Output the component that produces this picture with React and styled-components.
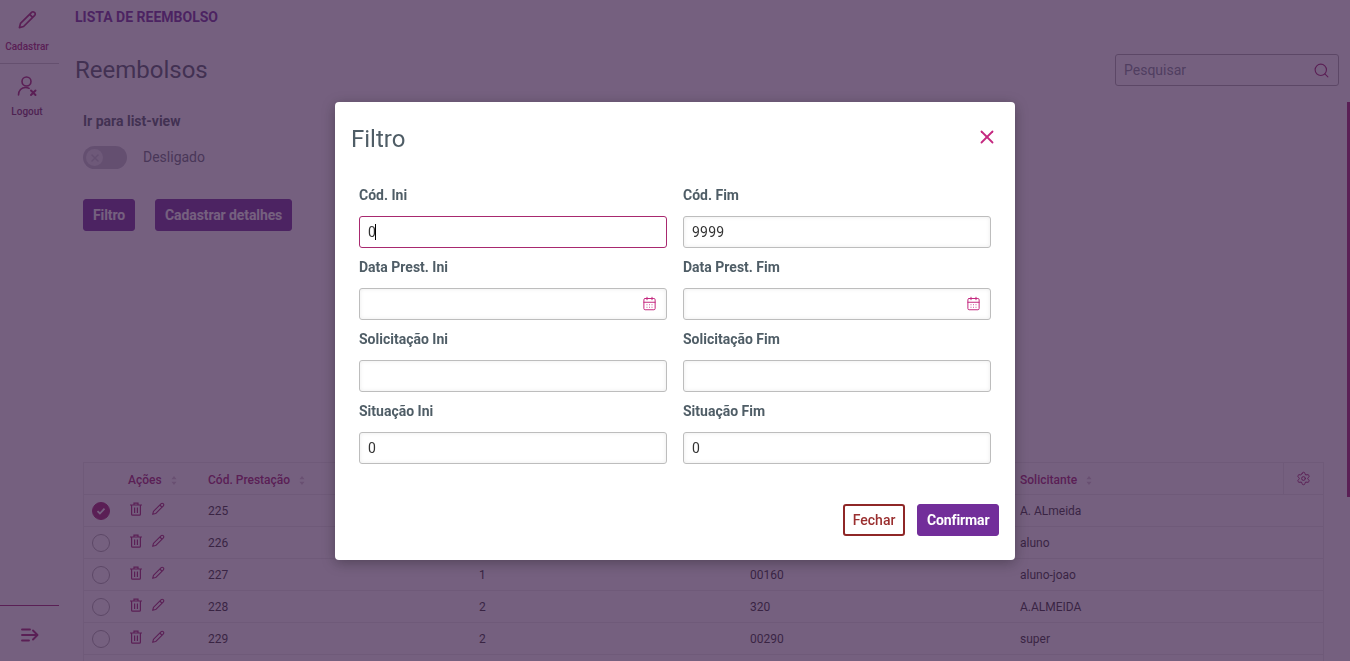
import React from "react";
import styled, { createGlobalStyle } from "styled-components";
import { CalendarDays, Search, Settings, X } from "lucide-react";

const primary = "#a3206f";
const purple = "#722e9a";
const slate = "#4f5d66";
const line = "#ebebeb";

const GlobalStyle = createGlobalStyle`
  html, body { margin: 0; height: 100%; overflow: hidden; background: #fff; }
  body { font-family: Roboto, "Liberation Sans", sans-serif; color: #333; }
  * { box-sizing: border-box; }
`;

const Page = styled.div`
  display: flex;
  width: 1350px;
  height: 661px;
  overflow: hidden;
`;

// menu lateral
const Sidebar = styled.aside`
  width: 59px;
  flex: none;
  display: flex;
  flex-direction: column;
`;

const SideItem = styled.a`
  height: ${(p) => p.$h}px;
  display: flex;
  flex-direction: column;
  align-items: center;
  padding-top: ${(p) => p.$top}px;
  padding-right: 5px;
  font-size: 10px;
  line-height: 12px;
  font-weight: 500;
  color: ${(p) => p.$color};
  border-bottom: ${(p) => (p.$line ? "1px solid #c9c9c9" : "none")};
  svg { margin-bottom: ${(p) => p.$gap}px; color: ${primary}; }
`;

const SideFoot = styled.div`
  margin-top: auto;
  height: 56px;
  border-top: 1px solid ${primary};
  display: flex;
  justify-content: center;
  padding-top: 21px;
  color: ${primary};
`;

const Main = styled.main`
  flex: 1;
  min-width: 0;
  padding: 0 11px 0 16px;
`;

const Crumb = styled.div`
  height: 34px;
  line-height: 34px;
  font-size: 14px;
  font-weight: 700;
  color: ${purple};
`;

const TitleBar = styled.div`
  height: 52px;
  margin-top: 20px;
  display: flex;
  justify-content: space-between;
  align-items: flex-start;
`;

const Title = styled.h1`
  margin: 0;
  font-size: 24px;
  line-height: 32px;
  font-weight: 400;
  color: ${slate};
`;

const SearchBox = styled.div`
  width: 224px;
  height: 32px;
  border: 1px solid #a9a9a9;
  border-radius: 3px;
  display: flex;
  align-items: center;
  justify-content: space-between;
  padding: 0 8px 0 8px;
  font-size: 14px;
  color: #808b96;
  svg { color: ${primary}; }
`;

const Content = styled.section`
  padding-left: 8px;
`;

const SectionLabel = styled.div`
  font-size: 14px;
  line-height: 22px;
  font-weight: 700;
  color: ${slate};
  margin-top: 4px;
`;

const ToggleRow = styled.div`
  display: flex;
  align-items: center;
  gap: 16px;
  margin-top: 14px;
  font-size: 14px;
  line-height: 21px;
  color: #68717a;
`;

const ToggleText = styled.span`
  margin-top: -1px;
`;

const Track = styled.div`
  position: relative;
  width: 44px;
  height: 23px;
  border-radius: 12px;
  background: #c4c4cc;
`;

const Knob = styled.div`
  position: absolute;
  left: 3px;
  top: 3px;
  width: 17px;
  height: 17px;
  border-radius: 50%;
  background: #e6e6ea;
  color: #c4c4cc;
  display: flex;
  align-items: center;
  justify-content: center;
`;

const ButtonRow = styled.div`
  display: flex;
  gap: 20px;
  margin-top: 30px;
`;

const Button = styled.button`
  height: 32px;
  padding: 0 ${(p) => p.$pad ?? 9}px 1px;
  border: ${(p) => (p.$outline ? "2px solid #8f2727" : `1px solid ${purple}`)};
  border-radius: 3px;
  background: ${(p) => (p.$outline ? "#fff" : purple)};
  color: ${(p) => (p.$outline ? "#9a2f2f" : "#fff")};
  font-family: Roboto, "Liberation Sans", sans-serif;
  font-size: 14px;
  font-weight: ${(p) => (p.$outline ? 500 : 700)};
  letter-spacing: ${(p) => (p.$outline ? 0 : "-0.1px")};
`;

const Table = styled.div`
  margin-top: 231px;
  width: 1241px;
  border: 1px solid ${line};
  border-bottom: 0;
`;

const Row = styled.div`
  display: grid;
  grid-template-columns: 44px 80px 271px 271px 270px 263px 40px;
  height: 32px;
  align-items: center;
  border-bottom: 1px solid ${line};
  font-size: 12px;
  color: #333;
`;

const HeadCell = styled.div`
  display: flex;
  align-items: center;
  gap: 9px;
  height: 100%;
  font-weight: 500;
  color: ${primary};
  border-left: ${(p) => (p.$gear ? `1px solid ${line}` : "none")};
  justify-content: ${(p) => (p.$gear ? "center" : "flex-start")};
  padding-top: ${(p) => (p.$gear ? 0 : 3)}px;
`;

const CheckCell = styled.div`
  display: flex;
  padding-left: 8px;
`;

const Radio = styled.div`
  width: 18px;
  height: 18px;
  border-radius: 50%;
  border: 1px solid ${(p) => (p.$on ? primary : "#aaa")};
  background: ${(p) => (p.$on ? primary : "transparent")};
  display: flex;
  align-items: center;
  justify-content: center;
`;

const Actions = styled.div`
  display: flex;
  gap: 8px;
  padding-left: 1px;
  color: ${primary};
  margin-top: -3px;
`;

const Scrollbar = styled.div`
  position: fixed;
  right: 0;
  top: 102px;
  width: 3px;
  height: 395px;
  background: ${primary};
`;

// modal
const Overlay = styled.div`
  position: fixed;
  inset: 0;
  background: rgba(60, 31, 74, 0.71);
  display: flex;
  align-items: flex-start;
  justify-content: center;
  padding-top: 102px;
`;

const Modal = styled.div`
  width: 680px;
  height: 458px;
  background: #fff;
  border-radius: 4px;
  box-shadow: 0 3px 14px rgba(0, 0, 0, 0.3);
  display: flex;
  flex-direction: column;
`;

const ModalHead = styled.div`
  height: 82px;
  padding: 21px 17px 0 16px;
  display: flex;
  justify-content: space-between;
  align-items: flex-start;
`;

const ModalTitle = styled.h2`
  margin: 0;
  font-size: 24px;
  line-height: 32px;
  font-weight: 400;
  color: ${slate};
`;

const CloseIcon = styled(X)`
  color: #c4287f;
  margin-top: 3px;
`;

const FormGrid = styled.div`
  display: grid;
  grid-template-columns: 308px 308px;
  column-gap: 16px;
  padding-left: 24px;
`;

const FormField = styled.label`
  display: block;
  height: 72px;
`;

const FieldLabel = styled.div`
  font-size: 14px;
  line-height: 22px;
  font-weight: 700;
  color: ${slate};
  margin-bottom: 10px;
`;

const InputWrap = styled.div`
  position: relative;
  height: 32px;
`;

const Input = styled.input`
  display: block;
  width: 100%;
  height: 32px;
  padding: 0 8px;
  border: 1px solid ${(p) => (p.$focused ? "#a8296f" : "#bdbdbd")};
  border-radius: 3px;
  background: #fff;
  outline: none;
  box-shadow: ${(p) => (p.$focused ? "none" : "inset 0 0 4px rgba(0, 0, 0, 0.08)")};
  font-family: Roboto, "Liberation Sans", sans-serif;
  font-size: 14px;
  letter-spacing: 0.2px;
  color: #333;
`;

const Caret = styled.span`
  position: absolute;
  left: 16px;
  top: 8px;
  width: 1px;
  height: 16px;
  background: #000;
`;

const CalendarIcon = styled(CalendarDays)`
  position: absolute;
  right: 10px;
  top: 8px;
  color: #c4287f;
`;

const ModalFoot = styled.div`
  margin-top: auto;
  padding: 0 16px 24px;
  display: flex;
  justify-content: flex-end;
  gap: 12px;
`;

const PencilIcon = ({ size = 16, width = 1.5 }) => (
  <svg width={size} height={size} viewBox="0 0 20 20" fill="none" stroke="currentColor" strokeWidth={width} strokeLinejoin="round">
    <path d="M14.6 2.3a1.9 1.9 0 0 1 2.7 0l.4.4a1.9 1.9 0 0 1 0 2.7L6.6 16.500l-4.200 1.100 1.100-4.200z" />
    <path d="M12.600 4.300l3.100 3.100" />
  </svg>
);

const TrashIcon = () => (
  <svg width="14" height="14" viewBox="0 0 14 14" fill="none" stroke="currentColor" strokeWidth="1.2">
    <path d="M1 3h12M5 3V1.200h4V3M2.600 3v9.200c0 .6.4 1 1 1h6.800c.6 0 1-.4 1-1V3M5.600 5.500v5.500M8.400 5.500v5.500" />
  </svg>
);

const LogoutIcon = () => (
  <svg width="22" height="22" viewBox="0 0 22 22" fill="none" stroke="currentColor" strokeWidth="1.6" strokeLinecap="round">
    <circle cx="10.500" cy="6.500" r="4.500" />
    <path d="M2.500 20c0-4.500 3-7.500 7-7.500 1.400 0 2.600.3 3.600.9" />
    <path d="M15 15.500l4.500 4.500M19.500 15.500L15 20" strokeWidth="2" />
  </svg>
);

const CollapseIcon = () => (
  <svg width="18" height="16" viewBox="0 0 18 16" fill="none" stroke="currentColor" strokeWidth="1.9" strokeLinecap="round" strokeLinejoin="round">
    <path d="M1 2.500h8M1 8h15M1 13.500h7M12 3.500L16.500 8 12 12.500" />
  </svg>
);

const SortIcon = () => (
  <svg width="6" height="9" viewBox="0 0 6 9" fill="#d6c6d2">
    <path d="M3 0l2.600 3.200H.4zM3 9L.4 5.800h5.200z" />
  </svg>
);

const CheckMark = () => (
  <svg width="10" height="10" viewBox="0 0 10 10" fill="none" stroke="#fff" strokeWidth="1.8">
    <path d="M1.500 5.200l2.400 2.300 4.600-4.800" />
  </svg>
);

const rows = [
  { id: "225", a: "", b: "", who: "A. ALmeida", on: true },
  { id: "226", a: "", b: "", who: "aluno" },
  { id: "227", a: "1", b: "00160", who: "aluno-joao" },
  { id: "228", a: "2", b: "320", who: "A.ALMEIDA" },
  { id: "229", a: "2", b: "00290", who: "super" },
];

const fields = [
  ["Cód. Ini", "0", "Cód. Fim", "9999"],
  ["Data Prest. Ini", "", "Data Prest. Fim", "", true],
  ["Solicitação Ini", "", "Solicitação Fim", ""],
  ["Situação Ini", "0", "Situação Fim", "0"],
];

const Field = ({ label, value, date, focused }) => (
  <FormField>
    <FieldLabel>{label}</FieldLabel>
    <InputWrap>
      <Input readOnly value={value} $focused={focused} />
      {focused && <Caret />}
      {date && <CalendarIcon size={15} strokeWidth={1.6} />}
    </InputWrap>
  </FormField>
);

const App = () => {
  return (
    <>
      <GlobalStyle />
      <Page>
        <Sidebar>
          <SideItem $h={64} $top={10} $gap={11} $line $color={primary}>
            <PencilIcon size={20} width={1.7} />
            Cadastrar
          </SideItem>
          <SideItem $h={60} $top={11} $gap={9} $color="#7a2a66">
            <LogoutIcon />
            Logout
          </SideItem>
          <SideFoot>
            <CollapseIcon />
          </SideFoot>
        </Sidebar>
        <Main>
          <Crumb>LISTA DE REEMBOLSO</Crumb>
          <TitleBar>
            <Title>Reembolsos</Title>
            <SearchBox>
              Pesquisar
              <Search size={17} strokeWidth={1.6} />
            </SearchBox>
          </TitleBar>
          <Content>
            <SectionLabel>Ir para list-view</SectionLabel>
            <ToggleRow>
              <Track>
                <Knob>
                  <X size={12} strokeWidth={3} />
                </Knob>
              </Track>
              <ToggleText>Desligado</ToggleText>
            </ToggleRow>
            <ButtonRow>
              <Button>Filtro</Button>
              <Button>Cadastrar detalhes</Button>
            </ButtonRow>
            <Table>
              <Row>
                <HeadCell />
                <HeadCell>Ações <SortIcon /></HeadCell>
                <HeadCell>Cód. Prestação <SortIcon /></HeadCell>
                <HeadCell />
                <HeadCell />
                <HeadCell>Solicitante <SortIcon /></HeadCell>
                <HeadCell $gear><Settings size={15} strokeWidth={1.6} /></HeadCell>
              </Row>
              {rows.map((r) => (
                <Row key={r.id}>
                  <CheckCell>
                    <Radio $on={r.on}>{r.on && <CheckMark />}</Radio>
                  </CheckCell>
                  <Actions>
                    <TrashIcon />
                    <PencilIcon size={14} width={1.6} />
                  </Actions>
                  <div>{r.id}</div>
                  <div>{r.a}</div>
                  <div>{r.b}</div>
                  <div>{r.who}</div>
                  <div />
                </Row>
              ))}
              <Row />
            </Table>
          </Content>
        </Main>
      </Page>
      <Scrollbar />
      <Overlay>
        <Modal>
          <ModalHead>
            <ModalTitle>Filtro</ModalTitle>
            <CloseIcon size={22} strokeWidth={2} />
          </ModalHead>
          <FormGrid>
            {fields.map(([l1, v1, l2, v2, date], i) => (
              <React.Fragment key={l1}>
                <Field label={l1} value={v1} date={date} focused={i === 0} />
                <Field label={l2} value={v2} date={date} />
              </React.Fragment>
            ))}
          </FormGrid>
          <ModalFoot>
            <Button $outline $pad={8}>Fechar</Button>
            <Button $pad={8.5}>Confirmar</Button>
          </ModalFoot>
        </Modal>
      </Overlay>
    </>
  );
};

export default App;
